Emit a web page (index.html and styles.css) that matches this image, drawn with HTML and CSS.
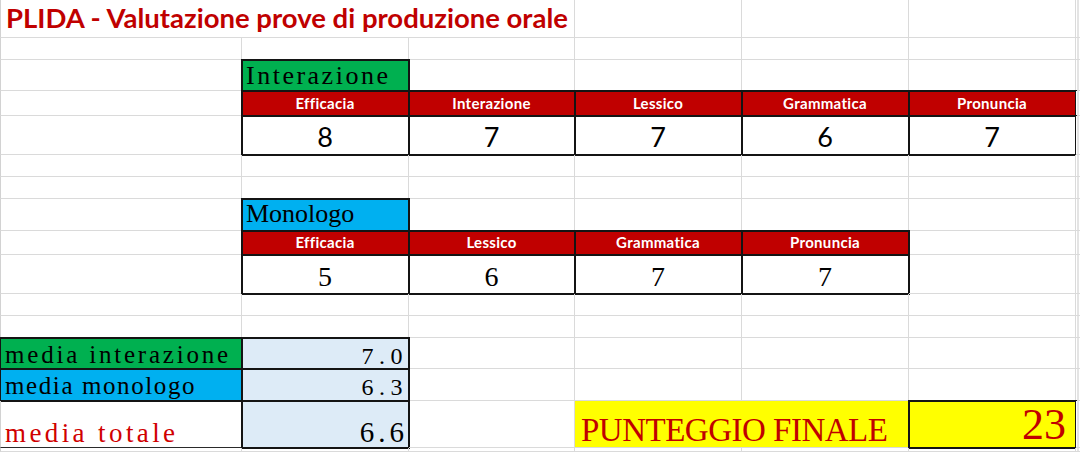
FILE: index.html
```html
<!DOCTYPE html>
<html lang="it">
<head>
<meta charset="utf-8">
<title>PLIDA - Valutazione prove di produzione orale</title>
<link rel="stylesheet" href="styles.css">
</head>
<body>
<div class="sheet">
  <div class="row h38">
    <div class="c title s3">PLIDA - Valutazione prove di produzione orale</div>
    <div class="c"></div><div class="c"></div><div class="c"></div><div class="c g"></div>
  </div>
  <div class="row h22">
    <div class="c"></div><div class="c"></div><div class="c"></div><div class="c"></div><div class="c"></div><div class="c"></div><div class="c g"></div>
  </div>
  <div class="row h31">
    <div class="c"></div>
    <div class="c box green sect sect-int">Interazione</div>
    <div class="c"></div><div class="c"></div><div class="c"></div><div class="c"></div><div class="c g"></div>
  </div>
  <div class="row h25">
    <div class="c"></div>
    <div class="c box head">Efficacia</div>
    <div class="c box head">Interazione</div>
    <div class="c box head">Lessico</div>
    <div class="c box head">Grammatica</div>
    <div class="c box head">Pronuncia</div>
    <div class="c g"></div>
  </div>
  <div class="row h39">
    <div class="c"></div>
    <div class="c box val">8</div>
    <div class="c box val">7</div>
    <div class="c box val">7</div>
    <div class="c box val">6</div>
    <div class="c box val">7</div>
    <div class="c g"></div>
  </div>
  <div class="row h22">
    <div class="c"></div><div class="c"></div><div class="c"></div><div class="c"></div><div class="c"></div><div class="c"></div><div class="c g"></div>
  </div>
  <div class="row h22">
    <div class="c"></div><div class="c"></div><div class="c"></div><div class="c"></div><div class="c"></div><div class="c"></div><div class="c g"></div>
  </div>
  <div class="row h32">
    <div class="c"></div>
    <div class="c box cyan sect sect-mono">Monologo</div>
    <div class="c"></div><div class="c"></div><div class="c"></div><div class="c"></div><div class="c g"></div>
  </div>
  <div class="row h24">
    <div class="c"></div>
    <div class="c box head">Efficacia</div>
    <div class="c box head">Lessico</div>
    <div class="c box head">Grammatica</div>
    <div class="c box head">Pronuncia</div>
    <div class="c"></div>
    <div class="c g"></div>
  </div>
  <div class="row h39">
    <div class="c"></div>
    <div class="c box val-serif">5</div>
    <div class="c box val-serif">6</div>
    <div class="c box val-serif">7</div>
    <div class="c box val-serif">7</div>
    <div class="c"></div>
    <div class="c g"></div>
  </div>
  <div class="row h22">
    <div class="c"></div><div class="c"></div><div class="c"></div><div class="c"></div><div class="c"></div><div class="c"></div><div class="c g"></div>
  </div>
  <div class="row h22">
    <div class="c"></div><div class="c"></div><div class="c"></div><div class="c"></div><div class="c"></div><div class="c"></div><div class="c g"></div>
  </div>
  <div class="row h31">
    <div class="c box green label lab-int">media interazione</div>
    <div class="c box lblue num num-sm pb0">7.0</div>
    <div class="c"></div><div class="c"></div><div class="c"></div><div class="c"></div><div class="c g"></div>
  </div>
  <div class="row h32">
    <div class="c box cyan label lab-mono">media monologo</div>
    <div class="c box lblue num num-sm pb1">6.3</div>
    <div class="c"></div><div class="c"></div><div class="c"></div><div class="c"></div><div class="c g"></div>
  </div>
  <div class="row h47">
    <div class="c total">media totale</div>
    <div class="c box lblue num num-lg">6.6</div>
    <div class="c"></div>
    <div class="c s2 yellow final">PUNTEGGIO FINALE</div>
    <div class="c box yellow score">23</div>
    <div class="c g"></div>
  </div>
  <div class="row hrest">
    <div class="c"></div><div class="c"></div><div class="c"></div><div class="c"></div><div class="c"></div><div class="c"></div><div class="c g"></div>
  </div>
</div>
</body>
</html>
```

FILE: styles.css
```css
html, body {
  margin: 0;
  padding: 0;
  background: #ffffff;
}

body {
  overflow: hidden;
}

.sheet {
  width: 1080px;
  height: 452px;
  overflow: hidden;
  display: flex;
  flex-direction: column;
}

.row {
  display: grid;
  grid-template-columns: 242px 167px 166px 167px 167px 167px 1fr;
  flex: none;
}

.h22 { height: 22px; }
.h24 { height: 24px; }
.h25 { height: 25px; }
.h31 { height: 31px; }
.h32 { height: 32px; }
.h38 { height: 38px; }
.h39 { height: 39px; }
.h47 { height: 47px; }
.hrest { flex: 1; }

.c {
  box-sizing: border-box;
  border-right: 1px solid #dadada;
  border-bottom: 1px solid #dadada;
  display: flex;
  align-items: flex-end;
  min-width: 0;
  white-space: nowrap;
  line-height: 1;
}

.c:first-child {
  border-left: 1px solid #d2d2d2;
}

.g {
  border-right: none;
  background: linear-gradient(to right, #ffffff 0, #ffffff 1px, #e4e4e4 1px, #e4e4e4 3px, #ffffff 3px);
}

.s2 { grid-column: span 2; }
.s3 { grid-column: span 3; }

.box {
  outline: 2px solid #141414;
  outline-offset: -1px;
}

/* fills */
.green  { background: #00b050; }
.cyan   { background: #00b0f0; }
.lblue  { background: #ddebf7; }
.yellow { background: #ffff00; }

/* title */
.title {
  font-family: Lato, "Liberation Sans", sans-serif;
  font-weight: 700;
  font-size: 27.5px;
  color: #c00000;
  padding: 0 0 6px 5px;
}

/* section captions (Interazione / Monologo) */
.sect {
  font-family: "Liberation Serif", serif;
  font-size: 26px;
  color: #000;
  padding-left: 4px;
}
.sect-int  { letter-spacing: 2.5px; padding-bottom: 1px; }
.sect-mono { letter-spacing: 0; padding-bottom: 3px; }

/* red column headers */
.head {
  background: #c00000;
  color: #ffffff;
  font-family: Lato, "Liberation Sans", sans-serif;
  font-weight: 700;
  font-size: 15px;
  letter-spacing: 0.3px;
  justify-content: center;
  padding-bottom: 4px;
}

/* score values */
.val {
  background: #fff;
  font-family: Lato, "Liberation Sans", sans-serif;
  font-size: 27px;
  color: #000;
  justify-content: center;
  padding-bottom: 4px;
}

.val-serif {
  background: #fff;
  font-family: "Liberation Serif", serif;
  font-size: 28px;
  color: #000;
  justify-content: center;
  padding-bottom: 2px;
}

/* average labels */
.label {
  font-family: "Liberation Serif", serif;
  font-size: 25px;
  color: #000;
  padding-left: 4px;
}
.lab-int  { letter-spacing: 2.8px; padding-bottom: 1px; }
.lab-mono { letter-spacing: 1.6px; padding-bottom: 2px; }

.total {
  font-family: "Liberation Serif", serif;
  font-size: 27px;
  letter-spacing: 3.4px;
  color: #d00000;
  padding-left: 4px;
  border-bottom-color: #2a2a2a;
}

/* average numbers */
.num {
  font-family: "Liberation Serif", serif;
  color: #000;
  justify-content: flex-end;
}
.num-sm {
  font-size: 24px;
  letter-spacing: 5.5px;
  padding-right: 0;
}
.num-lg {
  font-size: 29px;
  letter-spacing: 4px;
  padding-right: 0;
}
.pb0 { padding-bottom: 0; }
.pb1 { padding-bottom: 1px; }

/* final score */
.final {
  font-family: "Liberation Serif", serif;
  font-size: 33px;
  letter-spacing: -0.5px;
  color: #c00000;
  padding-left: 6px;
  border-right-color: #ffff00;
}

.score {
  font-family: "Liberation Serif", serif;
  font-size: 44px;
  color: #c00000;
  justify-content: flex-end;
  padding-right: 9px;
}
```
